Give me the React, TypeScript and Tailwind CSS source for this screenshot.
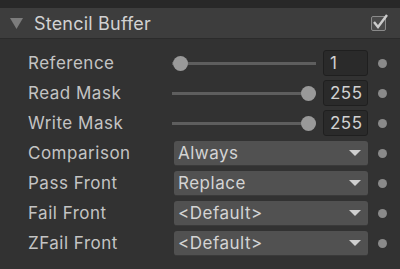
import React from "react";

const font = { fontFamily: "Inter, 'Noto Sans', sans-serif" };

function Dot() {
  return (
    <div className="w-[32px] flex items-center">
      <div className="ml-[10px] w-[9px] h-[9px] rounded-full bg-[#8a8a8a]" />
    </div>
  );
}

function SliderRow({ label, value }: { label: string; value: number }) {
  const left = (129 * value) / 255;
  return (
    <div className="h-[30px] flex items-center">
      <div className="w-[172px] pl-[28px] pt-[1px] text-[17px] tracking-[0.5px] text-[#c4c4c4] leading-none">{label}</div>
      <div className="relative w-[144px] h-[15px] flex items-center">
        <div className="w-full h-[3px] bg-[#5e5e5e]" />
        <div
          className="absolute top-0 w-[15px] h-[15px] rounded-full bg-[#999999]"
          style={{ left: `${left}px` }}
        />
      </div>
      <div className="ml-[7px] w-[45px] h-[26px] rounded-[3px] bg-[#2a2a2a] border border-[#1f1f1f] flex items-center pl-[6px] pt-[1px] text-[17px] tracking-[0.5px] text-[#d2d2d2] leading-none">
        {value}
      </div>
      <Dot />
    </div>
  );
}

function DropRow({ label, value }: { label: string; value: string }) {
  return (
    <div className="h-[30px] flex items-center">
      <div className="w-[172px] pl-[28px] pt-[1px] text-[17px] tracking-[0.5px] text-[#c4c4c4] leading-none">{label}</div>
      <div className="ml-[2px] w-[194px] h-[25px] rounded-[3px] bg-[#515151] border-b border-[#3a3a3a] flex items-center justify-between pl-[4px] pr-[7px] text-[17px] tracking-[0.5px] text-[#d4d4d4] leading-none">
        <span className="pt-[1px]">{value}</span>
        <svg width="12" height="6" viewBox="0 0 12 6">
          <polygon points="0,0 12,0 6,6" fill="#cfcfcf" />
        </svg>
      </div>
      <Dot />
    </div>
  );
}

export default function App() {
  return (
    <div className="w-[400px] h-[269px] bg-[#323232] overflow-hidden" style={font}>
      <div className="h-[8px] bg-[#282828]" />
      <div className="h-[31px] bg-[#3d3d3d] flex items-center border-b border-[#2b2b2b]">
        <svg className="ml-[10px]" width="13" height="11" viewBox="0 0 13 11">
          <polygon points="0,0 13,0 6.5,11" fill="#7c7c7c" />
        </svg>
        <span className="ml-[11px] pt-[1px] text-[18px] tracking-[0.2px] text-[#d2d2d2] leading-none">Stencil Buffer</span>
        <div className="ml-auto mr-[14px] relative w-[15px] h-[15px] border border-[#8a8a8a] bg-[#4a4a4a] rounded-[2px]">
          <svg className="absolute -top-[4px] -left-[1px]" width="19" height="18" viewBox="0 0 19 18">
            <polyline points="3,9 7,14 16,2" fill="none" stroke="#cccccc" strokeWidth="2.4" />
          </svg>
        </div>
      </div>
      <div className="pt-[9px]">
        <SliderRow label="Reference" value={1} />
        <SliderRow label="Read Mask" value={255} />
        <SliderRow label="Write Mask" value={255} />
        <DropRow label="Comparison" value="Always" />
        <DropRow label="Pass Front" value="Replace" />
        <DropRow label="Fail Front" value="<Default>" />
        <DropRow label="ZFail Front" value="<Default>" />
      </div>
    </div>
  );
}
